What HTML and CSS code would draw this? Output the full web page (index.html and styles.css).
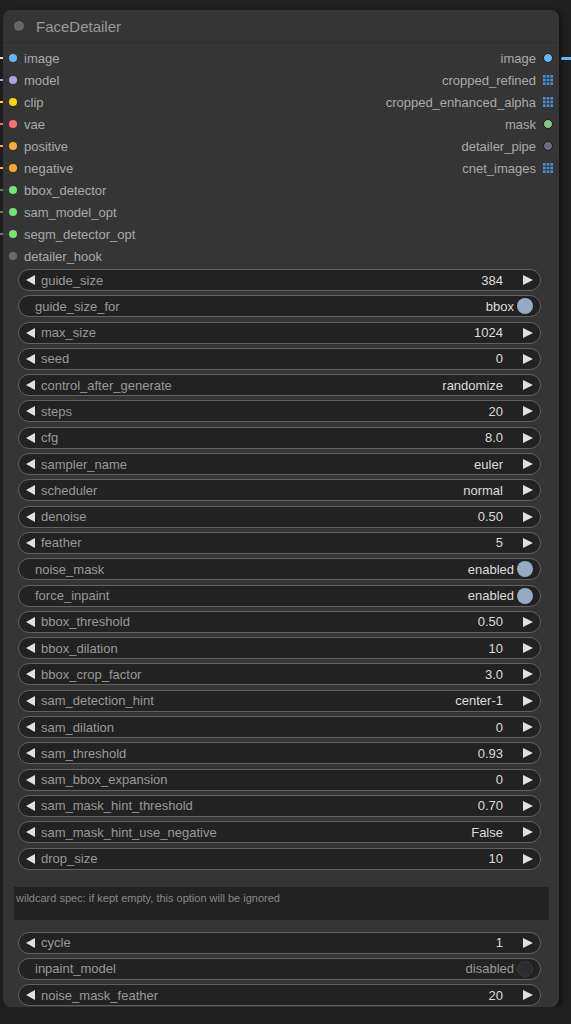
FILE: index.html
```html
<!DOCTYPE html>
<html lang="en">
<head>
    <meta charset="UTF-8">
    <title>FaceDetailer</title>
    <link rel="stylesheet" href="styles.css">
</head>
<body>
    <div class="node">
        <div class="title">
            <span class="title-dot"></span>
            <span>FaceDetailer</span>
        </div>

        <div class="slots">
            <div class="inputs">
                <div class="slot in c-image"><span class="dot"></span>image</div>
                <div class="slot in c-model"><span class="dot"></span>model</div>
                <div class="slot in c-clip"><span class="dot"></span>clip</div>
                <div class="slot in c-vae"><span class="dot"></span>vae</div>
                <div class="slot in c-cond"><span class="dot"></span>positive</div>
                <div class="slot in c-cond"><span class="dot"></span>negative</div>
                <div class="slot in c-det"><span class="dot"></span>bbox_detector</div>
                <div class="slot in c-det"><span class="dot"></span>sam_model_opt</div>
                <div class="slot in c-det"><span class="dot"></span>segm_detector_opt</div>
                <div class="slot in c-hook"><span class="dot"></span>detailer_hook</div>
            </div>
            <div class="outputs">
                <div class="slot out linked">image<span class="dot c-image"></span></div>
                <div class="slot out">cropped_refined<svg class="grid" width="10" height="10" viewBox="0 0 10 10"><rect x="0" y="0" width="2.6" height="2.6"/><rect x="3.7" y="0" width="2.6" height="2.6"/><rect x="7.4" y="0" width="2.6" height="2.6"/><rect x="0" y="3.7" width="2.6" height="2.6"/><rect x="3.7" y="3.7" width="2.6" height="2.6"/><rect x="7.4" y="3.7" width="2.6" height="2.6"/><rect x="0" y="7.4" width="2.6" height="2.6"/><rect x="3.7" y="7.4" width="2.6" height="2.6"/><rect x="7.4" y="7.4" width="2.6" height="2.6"/></svg></div>
                <div class="slot out">cropped_enhanced_alpha<svg class="grid" width="10" height="10" viewBox="0 0 10 10"><rect x="0" y="0" width="2.6" height="2.6"/><rect x="3.7" y="0" width="2.6" height="2.6"/><rect x="7.4" y="0" width="2.6" height="2.6"/><rect x="0" y="3.7" width="2.6" height="2.6"/><rect x="3.7" y="3.7" width="2.6" height="2.6"/><rect x="7.4" y="3.7" width="2.6" height="2.6"/><rect x="0" y="7.4" width="2.6" height="2.6"/><rect x="3.7" y="7.4" width="2.6" height="2.6"/><rect x="7.4" y="7.4" width="2.6" height="2.6"/></svg></div>
                <div class="slot out">mask<span class="dot c-mask"></span></div>
                <div class="slot out">detailer_pipe<span class="dot c-pipe"></span></div>
                <div class="slot out">cnet_images<svg class="grid" width="10" height="10" viewBox="0 0 10 10"><rect x="0" y="0" width="2.6" height="2.6"/><rect x="3.7" y="0" width="2.6" height="2.6"/><rect x="7.4" y="0" width="2.6" height="2.6"/><rect x="0" y="3.7" width="2.6" height="2.6"/><rect x="3.7" y="3.7" width="2.6" height="2.6"/><rect x="7.4" y="3.7" width="2.6" height="2.6"/><rect x="0" y="7.4" width="2.6" height="2.6"/><rect x="3.7" y="7.4" width="2.6" height="2.6"/><rect x="7.4" y="7.4" width="2.6" height="2.6"/></svg></div>
            </div>
        </div>

        <div class="widgets">
            <div class="widget"><span class="arrow left"></span><span class="label">guide_size</span><span class="value">384</span><span class="arrow right"></span></div>
            <div class="widget toggle"><span class="label">guide_size_for</span><span class="value">bbox</span><span class="knob"></span></div>
            <div class="widget"><span class="arrow left"></span><span class="label">max_size</span><span class="value">1024</span><span class="arrow right"></span></div>
            <div class="widget"><span class="arrow left"></span><span class="label">seed</span><span class="value">0</span><span class="arrow right"></span></div>
            <div class="widget"><span class="arrow left"></span><span class="label">control_after_generate</span><span class="value">randomize</span><span class="arrow right"></span></div>
            <div class="widget"><span class="arrow left"></span><span class="label">steps</span><span class="value">20</span><span class="arrow right"></span></div>
            <div class="widget"><span class="arrow left"></span><span class="label">cfg</span><span class="value">8.0</span><span class="arrow right"></span></div>
            <div class="widget"><span class="arrow left"></span><span class="label">sampler_name</span><span class="value">euler</span><span class="arrow right"></span></div>
            <div class="widget"><span class="arrow left"></span><span class="label">scheduler</span><span class="value">normal</span><span class="arrow right"></span></div>
            <div class="widget"><span class="arrow left"></span><span class="label">denoise</span><span class="value">0.50</span><span class="arrow right"></span></div>
            <div class="widget"><span class="arrow left"></span><span class="label">feather</span><span class="value">5</span><span class="arrow right"></span></div>
            <div class="widget toggle"><span class="label">noise_mask</span><span class="value">enabled</span><span class="knob"></span></div>
            <div class="widget toggle"><span class="label">force_inpaint</span><span class="value">enabled</span><span class="knob"></span></div>
            <div class="widget"><span class="arrow left"></span><span class="label">bbox_threshold</span><span class="value">0.50</span><span class="arrow right"></span></div>
            <div class="widget"><span class="arrow left"></span><span class="label">bbox_dilation</span><span class="value">10</span><span class="arrow right"></span></div>
            <div class="widget"><span class="arrow left"></span><span class="label">bbox_crop_factor</span><span class="value">3.0</span><span class="arrow right"></span></div>
            <div class="widget"><span class="arrow left"></span><span class="label">sam_detection_hint</span><span class="value">center-1</span><span class="arrow right"></span></div>
            <div class="widget"><span class="arrow left"></span><span class="label">sam_dilation</span><span class="value">0</span><span class="arrow right"></span></div>
            <div class="widget"><span class="arrow left"></span><span class="label">sam_threshold</span><span class="value">0.93</span><span class="arrow right"></span></div>
            <div class="widget"><span class="arrow left"></span><span class="label">sam_bbox_expansion</span><span class="value">0</span><span class="arrow right"></span></div>
            <div class="widget"><span class="arrow left"></span><span class="label">sam_mask_hint_threshold</span><span class="value">0.70</span><span class="arrow right"></span></div>
            <div class="widget"><span class="arrow left"></span><span class="label">sam_mask_hint_use_negative</span><span class="value">False</span><span class="arrow right"></span></div>
            <div class="widget"><span class="arrow left"></span><span class="label">drop_size</span><span class="value">10</span><span class="arrow right"></span></div>
        </div>

        <div class="textbox">wildcard spec: if kept empty, this option will be ignored</div>

        <div class="widgets">
            <div class="widget"><span class="arrow left"></span><span class="label">cycle</span><span class="value">1</span><span class="arrow right"></span></div>
            <div class="widget toggle off"><span class="label">inpaint_model</span><span class="value">disabled</span><span class="knob"></span></div>
            <div class="widget"><span class="arrow left"></span><span class="label">noise_mask_feather</span><span class="value">20</span><span class="arrow right"></span></div>
        </div>
    </div>
</body>
</html>
```

FILE: styles.css
```css
body {
    margin: 0;
    padding: 10px 0 0 3px;
    background-color: #202020;
    font-family: "Liberation Sans", Arial, sans-serif;
    font-size: 13px;
    color: #aaa;
}
.node {
    width: 556px;
    height: 997px;
    box-sizing: border-box;
    background-color: #353535;
    border-radius: 8px;
    box-shadow: 2px 2px 6px rgba(0, 0, 0, 0.5);
}
.title {
    height: 33px;
    display: flex;
    align-items: center;
    padding-left: 11px;
    gap: 12px;
    font-size: 15px;
    color: #999;
    border-bottom: 1px solid #2e2e2e;
    box-sizing: border-box;
}
.title-dot {
    width: 10px;
    height: 10px;
    border-radius: 50%;
    background-color: #666;
}

/* inputs and outputs */
.slots {
    display: flex;
    justify-content: space-between;
    padding-top: 4px;
}
.slot {
    position: relative;
    height: 22px;
    display: flex;
    align-items: center;
    color: #aaa;
}
.inputs .slot {
    padding-left: 6px;
    gap: 7px;
}
.outputs .slot {
    justify-content: flex-end;
    padding-right: 6px;
    gap: 7px;
}
.dot {
    width: 8px;
    height: 8px;
    border-radius: 50%;
    background-color: #888;
}
.outputs .dot {
    width: 8px;
    height: 8px;
    border: 1px solid #1c1c1c;
}
.grid {
    fill: #4a90d9;
}
.c-image .dot, .dot.c-image { background-color: #64b5f6; }
.c-model .dot { background-color: #b39ddb; }
.c-clip .dot { background-color: #ffd500; }
.c-vae .dot { background-color: #ff6e6e; }
.c-cond .dot { background-color: #ffa931; }
.c-det .dot { background-color: #6ee86e; }
.c-hook .dot { background-color: #6c6a78; }
.dot.c-mask { background-color: #81c784; }
.dot.c-pipe { background-color: #6e6a80; }

/* links leaving the node */
.in::before {
    content: "";
    position: absolute;
    left: -3px;
    top: 10px;
    width: 3px;
    height: 2px;
    background-color: #777;
}
.c-image::before { background-color: #ddd; }
.c-model::before { background-color: #b39ddb; }
.c-clip::before { background-color: #ffd500; }
.c-vae::before { background-color: #ff6e6e; }
.c-cond::before { background-color: #ffa931; }
.c-hook::before { display: none; }
.linked::after {
    content: "";
    position: absolute;
    right: -14px;
    top: 10px;
    width: 12px;
    height: 3px;
    border-radius: 2px;
    background-color: #64b5f6;
}

/* widgets */
.widgets {
    display: flex;
    flex-direction: column;
    gap: 4.3px;
    padding: 2px 18px 0 15px;
}
.widget {
    height: 22px;
    box-sizing: border-box;
    display: flex;
    align-items: center;
    background-color: #222;
    border: 1px solid #616161;
    border-radius: 11px;
    padding: 0 7px;
}
.label {
    flex: 1;
    color: #999;
    margin-left: 6px;
}
.value {
    color: #ddd;
    margin-right: 20px;
}
.arrow {
    width: 0;
    height: 0;
    border-top: 5.5px solid transparent;
    border-bottom: 5.5px solid transparent;
}
.arrow.left {
    border-right: 9px solid #e0e0e0;
}
.arrow.right {
    border-left: 10px solid #e0e0e0;
}
.toggle .label {
    margin-left: 9px;
}
.toggle .value {
    margin-right: 3px;
}
.knob {
    width: 16px;
    height: 16px;
    border-radius: 50%;
    background-color: #98a9c2;
}
.toggle.off .value {
    color: #999;
}
.toggle.off .knob {
    background-color: #2c2c2c;
    border: 1px solid #3a3a3a;
    box-sizing: border-box;
}

.textbox {
    margin: 17px 10px 10px 11px;
    height: 33px;
    background-color: #222;
    color: #888;
    font-size: 11px;
    padding: 5px 2px;
    box-sizing: border-box;
}
```
